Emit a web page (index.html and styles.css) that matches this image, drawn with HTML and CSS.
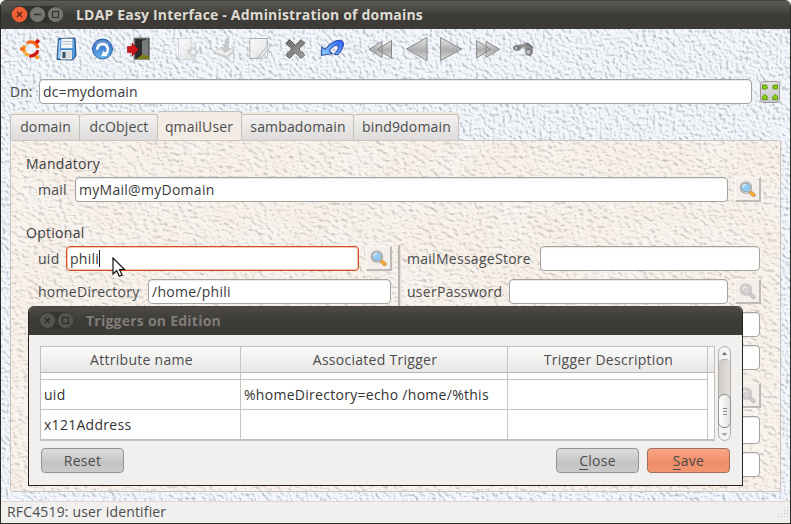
FILE: index.html
```html
<!DOCTYPE html>
<html lang="en">
<head>
<meta charset="utf-8">
<title>LDAP Easy Interface - Administration of domains</title>
<link rel="stylesheet" href="styles.css">
</head>
<body>
<svg class="defs" width="0" height="0" aria-hidden="true">
  <defs>
    <filter id="blueStone" x="0" y="0" width="100%" height="100%" color-interpolation-filters="sRGB">
      <feTurbulence type="fractalNoise" baseFrequency="0.3" numOctaves="2" seed="4"/>
      <feDiffuseLighting surfaceScale="2.2" diffuseConstant="1.27" lighting-color="#fff"><feDistantLight azimuth="315" elevation="52"/></feDiffuseLighting>
      <feColorMatrix values=".34 0 0 0 .612  0 .33 0 0 .64  0 0 .3 0 .687  0 0 0 0 1"/>
    </filter>
    <filter id="pinkStone" x="0" y="0" width="100%" height="100%" color-interpolation-filters="sRGB">
      <feTurbulence type="fractalNoise" baseFrequency="0.025" numOctaves="1" seed="3"/>
      <feColorMatrix result="tint" values="0 0 0 0 .975  .03 0 0 0 .935  .05 0 0 0 .9  0 0 0 0 1"/>
      <feTurbulence type="fractalNoise" baseFrequency="0.2 0.3" numOctaves="3" seed="9"/>
      <feDiffuseLighting surfaceScale="2" diffuseConstant="1.25" lighting-color="#fff"><feDistantLight azimuth="310" elevation="55"/></feDiffuseLighting>
      <feColorMatrix result="relief" values=".3 0 0 0 .7  0 .3 0 0 .7  0 0 .3 0 .7  0 0 0 0 1"/>
      <feBlend in="tint" in2="relief" mode="multiply"/>
    </filter>
    <linearGradient id="silver" x1="0" y1="0" x2="0" y2="1"><stop offset="0" stop-color="#e8e8e8"/><stop offset=".55" stop-color="#adadad"/><stop offset="1" stop-color="#dedede"/></linearGradient>
    <linearGradient id="steel" x1="0" y1="0" x2="1" y2="1"><stop offset="0" stop-color="#6b6b6b"/><stop offset="1" stop-color="#a2a2a2"/></linearGradient>
    <linearGradient id="blue" x1="0" y1="0" x2="0" y2="1"><stop offset="0" stop-color="#2a62b8"/><stop offset="1" stop-color="#69b4f0"/></linearGradient>
    <linearGradient id="undo" x1="1" y1="0" x2="0" y2="1"><stop offset="0" stop-color="#2458ff"/><stop offset="1" stop-color="#8fe0ff"/></linearGradient>
    <linearGradient id="paper" x1="0" y1="0" x2="1" y2="1"><stop offset="0" stop-color="#fff"/><stop offset="1" stop-color="#dcdcdc"/></linearGradient>
    <symbol id="lens" viewBox="0 0 16 16">
      <path d="M9.5 9.5l4.3 3.7" stroke="#b98a45" stroke-width="3.6" stroke-linecap="round"/>
      <path d="M10.8 10.6l3 2.6" stroke="#ffae32" stroke-width="2.4" stroke-linecap="round"/>
      <circle cx="6.5" cy="6.2" r="4.7" fill="#8fcdf5" stroke="#8f9496" stroke-width="2.1"/>
      <circle cx="6.5" cy="6.2" r="4.7" fill="none" stroke="#dcdfdf" stroke-width=".8"/>
      <path d="M3.6 6a3 3 0 0 1 3-2.7" fill="none" stroke="#d8f0ff" stroke-width="1.2"/>
    </symbol>
  </defs>
</svg>

<div class="window">
  <header class="titlebar">
    <span class="winbtns">
      <svg width="52" height="18" viewBox="0 0 52 18">
        <rect x="0" y="0" width="52" height="17" rx="8.5" fill="#33322e"/>
        <circle cx="8.5" cy="8.5" r="7.8" fill="#ec6034"/><path d="M6 6l5 5M11 6l-5 5" stroke="#5d2413" stroke-width="1.4"/>
        <circle cx="26.5" cy="8.5" r="7.6" fill="#777570"/><path d="M23 8.5h7" stroke="#33322e" stroke-width="1.4"/>
        <circle cx="44.5" cy="8.5" r="7.6" fill="#777570"/><rect x="41.5" y="5.5" width="6" height="6" fill="none" stroke="#33322e" stroke-width="1.2"/>
      </svg>
    </span>
    <span class="title main-title">LDAP Easy Interface - Administration of domains</span>
  </header>

  <main class="client">
    <svg class="texture" width="100%" height="100%"><rect width="100%" height="100%" filter="url(#blueStone)"/></svg>

    <nav class="toolbar">
      <i class="grip"></i>
      <svg class="tool" viewBox="0 0 24 24"><g fill="none" stroke-width="3.4"><path d="M5.800 15.500A7 7 0 0 1 5.800 8.500" stroke="#f7941d"/><path d="M7.800 6.200a7 7 0 0 1 11 5" stroke="#f4661b"/><path d="M18.800 13.200a7 7 0 0 1-8.500 5.500" stroke="#d4140c"/><path d="M9.500 18.500a7 7 0 0 1-3-2.700" stroke="#f7a31d"/></g><circle cx="3" cy="12" r="2.100" fill="#f4661b"/><circle cx="18.500" cy="4.300" r="2.100" fill="#d4140c"/><circle cx="18" cy="20.300" r="2.100" fill="#f79a1d"/></svg>
      <svg class="tool" viewBox="0 0 24 24"><path d="M3.500 1.500L20 1l1 18-3.500 4-15.500-.5z" fill="#3f86cf" stroke="#2d4f76"/><path d="M4 3h1.500l-.7 18H3z" fill="#9fd0ff"/><path d="M6.500 1.700h11v9.500H6z" fill="#f4f7fa"/><path d="M7.500 4.500h9M7.500 7h9" stroke="#b6c0c8"/><path d="M6 13.500h10.500v8.500H5.500z" fill="#d9dcda" stroke="#fff" stroke-width=".7"/><path d="M7.500 15h3v6h-3z" fill="#34536f"/><path d="M18.500 3v17" stroke="#64a8ea" stroke-width="1.200"/></svg>
      <svg class="tool" viewBox="0 0 24 24"><circle cx="11.500" cy="12" r="10" fill="url(#blue)" stroke="#2860aa"/><path d="M3.500 7.500a9.500 9.500 0 0 1 16 0Q11.500 11 3.500 7.500z" fill="#fff" opacity=".25"/><path d="M6.300 12.600a5.300 5.300 0 1 1 7.900 4.300" fill="none" stroke="#fff" stroke-width="2.700"/><path d="M16.500 19l-6.500.300 2.500-5.500z" fill="#fff"/></svg>
      <svg class="tool" viewBox="0 0 24 24"><path d="M7 1h15.500v21.500H7z" fill="#3a3b3b" stroke="#8c8c88"/><path d="M15 4l6.500-2.500v18H15z" fill="#777b7b"/><path d="M8 22l7-5 7 2.500v2.500z" fill="#7d7a19"/><path d="M15 2.500v15.300L9 22V2z" fill="#292a2a"/><path d="M.5 9.500H5V6l6.500 6.500L5 19v-3.400H.5z" fill="#cf151a" stroke="#900" stroke-width=".6"/></svg>
      <i class="grip second"></i>
      <svg class="tool faded" viewBox="0 0 24 24"><path d="M1.500 1.500H14l4.500 4.500v16.500h-17z" fill="url(#paper)" stroke="#d0d0d0"/><path d="M14 1.500V6h4.500" fill="#fff" stroke="#ccc"/><circle cx="16" cy="15" r="4" fill="none" stroke="#c4c4c4" stroke-width="2.500" stroke-dasharray="2 1.200"/><circle cx="16" cy="15" r="3" fill="#f1f1f1" stroke="#c4c4c4"/></svg>
      <svg class="tool faded" viewBox="0 0 24 24"><path d="M.5 15l8-4.500 13 2-8 7z" fill="#ededed" stroke="#c4c4c4"/><path d="M21.500 13v2l-8 6.500-13-5v-1.500l13 4.500z" fill="#c0c0c0"/><path d="M13 1.500L16 1l-1 10 2.500 1-5.500 3.500-4-5 3 .3z" fill="#c1c1c1" stroke="#aaa" stroke-width=".6"/></svg>
      <svg class="tool faded" viewBox="0 0 24 24"><path d="M.8 1.500h17.500v11l-8.500 9H.8z" fill="url(#paper)" stroke="#999"/><path d="M8.500 21l3-4L19.500 8l1.700 1.800L13 20z" fill="#e5e5e5" stroke="#aaa"/><path d="M9 21.800l9.500-.8v-7" fill="none" stroke="#bbb"/></svg>
      <svg class="tool" viewBox="0 0 24 24"><path d="M4.500 2.500l5.800 5.800 5.800-5.800 3.700 3.700-5.800 5.800 5.800 5.800-3.700 3.700-5.800-5.800-5.800 5.800-3.700-3.700 5.800-5.800-5.800-5.800z" fill="url(#steel)" stroke="#484848" stroke-dasharray="1.500 .5"/></svg>
      <svg class="tool" viewBox="0 0 24 24"><path d="M.7 10l3.500 2.500C9 6 14 3 19.500 3.200c4.500 1.300 4 7.300-2.500 14.300l-3.700-.2c4.500-4.500 5-8.300 2.700-9-2.500-.500-5.500 2-7.700 5.700l3 2.500-10.600 1.800z" fill="url(#undo)" stroke="#3451a8" stroke-width="1.100"/></svg>
      <i class="grip third"></i>
      <svg class="tool" viewBox="0 0 24 24"><path d="M14 4.500v16L1 12.300zM23.500 3.500v17.500L9.500 12.300z" fill="url(#silver)" stroke="#878787"/></svg>
      <svg class="tool" viewBox="0 0 24 24"><path d="M23 .6v23L2.500 12z" fill="url(#silver)" stroke="#878787"/></svg>
      <svg class="tool" viewBox="0 0 24 24"><path d="M.6.600v23L21.500 12z" fill="url(#silver)" stroke="#878787"/></svg>
      <svg class="tool" viewBox="0 0 24 24"><path d="M.6 3.500v17.500L14.500 12.300zM10 4.500v16L23.500 12.300z" fill="url(#silver)" stroke="#878787"/></svg>
      <svg class="tool" viewBox="0 0 24 24"><path d="M4 8.500l6-1.500 2 2-5 5z" fill="#8b8b8b"/><ellipse cx="4.500" cy="11" rx="3.500" ry="2.800" fill="#777"/><path d="M9 7.500l7-1.500 5.500 4.500-2 6.500-5-2-2-4z" fill="#959595"/><path d="M12 6l4-.5 5.500 4.500-3 1z" fill="#777"/><circle cx="17" cy="15" r="3.700" fill="#777"/><circle cx="16.500" cy="15" r="2.200" fill="#bdbdbd"/><circle cx="4" cy="11" r="1.600" fill="#b7b7b7"/></svg>
    </nav>

    <div class="row dn-row">
      <span class="label w-dn">Dn:</span>
      <div class="field">dc=mydomain</div>
      <div class="expand"><svg width="18" height="20" viewBox="0 0 18 20"><g fill="#84cf08" stroke="#55850f" stroke-width=".8"><path d="M1.500 3h4l1 3-1 1h-4zM12.500 3h4v4h-4l-1-1zM1.500 14.500l2.200-2 2.500 2v3H1.500zM11.800 14.500l2.500-2 2.200 2v3h-4.700z"/></g></svg></div>
    </div>

    <div class="tabs">
      <span class="tab t1">domain</span><span class="tab t2">dcObject</span><span class="tab t3 active">qmailUser</span><span class="tab t4">sambadomain</span><span class="tab t5">bind9domain</span>
    </div>

    <section class="pane">
      <svg class="texture" width="100%" height="100%"><rect width="100%" height="100%" filter="url(#pinkStone)"/></svg>
      <div class="group">Mandatory</div>
      <div class="row indent">
        <span class="label w-mail">mail</span><div class="field">myMail@myDomain</div>
        <span class="search"><svg width="20" height="20"><use href="#lens"/></svg></span>
      </div>
      <div class="group second-group">Optional</div>
      <div class="columns">
        <div class="col left">
          <div class="row"><span class="label w-uid">uid</span><div class="field focus">phili<i class="caret"></i></div><span class="search"><svg width="20" height="20"><use href="#lens"/></svg></span></div>
          <div class="row"><span class="label w-home">homeDirectory</span><div class="field">/home/phili</div></div>
        </div>
        <i class="splitter"></i>
        <div class="col right">
          <div class="row"><span class="label w-store">mailMessageStore</span><div class="field"></div></div>
          <div class="row"><span class="label w-pass">userPassword</span><div class="field"></div><span class="search off"><svg width="20" height="20"><use href="#lens"/></svg></span></div>
          <div class="row"><div class="field"></div></div>
          <div class="row"><div class="field"></div></div>
          <div class="row low"><div class="field"></div><span class="search off"><svg width="20" height="20"><use href="#lens"/></svg></span></div>
          <div class="row tall"><div class="field"></div></div>
          <div class="row"><div class="field"></div></div>
        </div>
      </div>
    </section>
  </main>

  <footer class="status"><span class="status-text">RFC4519: user identifier</span>
    <svg width="12" height="12" viewBox="0 0 12 12"><path d="M10.500 1v10M7.500 4v7M4.500 7v4M1.500 10v1" stroke="#c4c2c0" stroke-dasharray="1 2"/></svg>
  </footer>
</div>

<svg class="pointer" width="14" height="21" viewBox="0 0 14 21"><path d="M1 1v16l3.700-3.500 2.600 5.800 2.800-1.200-2.600-5.600h5z" fill="#fff" stroke="#111" stroke-width="1.200"/></svg>

<div class="dialog">
  <header class="titlebar">
    <span class="winbtns">
      <svg width="34" height="18" viewBox="0 0 34 18"><rect width="34" height="17" rx="8.500" fill="#363531"/><circle cx="8.500" cy="8.500" r="7.600" fill="#55544f"/><path d="M6 6l5 5M11 6l-5 5" stroke="#2d2c29" stroke-width="1.400"/><circle cx="26.500" cy="8.500" r="7.600" fill="#55544f"/><rect x="23.500" y="5.500" width="6" height="6" fill="none" stroke="#2d2c29" stroke-width="1.200"/></svg>
    </span>
    <span class="title sub-title">Triggers on Edition</span>
  </header>
  <div class="dialog-body">
    <div class="table-wrap">
      <div class="table">
        <div class="tr head"><span>Attribute name</span><span>Associated Trigger</span><span>Trigger Description</span><span></span></div>
        <div class="tr sliver"><span></span><span></span><span></span></div>
        <div class="tr"><span>uid</span><span>%homeDirectory=echo /home/%this</span><span></span></div>
        <div class="tr"><span>x121Address</span><span></span><span></span></div>
      </div>
      <div class="scroll">
        <svg class="arrow" width="11" height="12" viewBox="0 0 11 12"><path d="M3 8h5L5.500 5z" fill="#6b6966"/></svg>
        <div class="track"><div class="thumb"><i></i><i></i><i></i></div></div>
        <svg class="arrow" width="11" height="12" viewBox="0 0 11 12"><path d="M2.500 5h6L5.500 8z" fill="#a3a09d"/></svg>
      </div>
    </div>
    <div class="buttons">
      <span class="btn">Reset</span>
      <span class="btn"><u>C</u>lose</span>
      <span class="btn primary"><u>S</u>ave</span>
    </div>
  </div>
</div>
</body>
</html>
```
FILE: styles.css
```css
* { box-sizing: border-box; }
body {
  margin: 0;
  width: 791px;
  height: 524px;
  overflow: hidden;
  position: relative;
  font: 14px/20px "Open Sans", "Noto Sans", sans-serif;
  letter-spacing: .28px;
  color: #4c4c4c;
  background: #fff;
}
.defs { position: absolute; }
.window {
  height: 524px;
  display: flex;
  flex-direction: column;
  border: 1px solid #2b2a27;
  border-width: 0 1px;
  border-radius: 6px 6px 0 0;
  overflow: hidden;
}
.titlebar {
  height: 29px;
  flex: none;
  display: flex;
  align-items: center;
  padding-left: 10px;
  border-top: 1px solid #45443f;
  background: linear-gradient(#5b5953, #45443f 40%, #3c3b37 50%, #3c3b37);
}
.winbtns { display: flex; width: 65px; }
.title { font-weight: 700; color: #dfdbd2; white-space: nowrap; letter-spacing: .18px; }
.client {
  position: relative;
  flex: 1;
  overflow: hidden;
  isolation: isolate;
  background: #edf2f8;
}
.texture { position: absolute; inset: 0; z-index: -1; }
.toolbar { height: 50px; display: flex; align-items: center; padding: 0 0 10px 3px; }
.tool { width: 24px; height: 24px; flex: none; margin-right: 12px; }
.grip { width: 5px; height: 9px; flex: none; margin-right: 10px; background: repeating-linear-gradient(#ded6d2 0 1px, transparent 1px 4px); }
.second { margin: 0 10px 0 -1px; }
.third { margin: 0 8px 0 -2px; }
.faded { opacity: .8; }
.row { display: flex; align-items: center; height: 25px; }
.dn-row { padding: 0 10px 0 9px; }
.label { flex: none; white-space: nowrap; }
.w-dn { width: 29px; letter-spacing: 0; }
.w-mail { width: 37px; }
.w-uid { width: 28px; }
.w-home { width: 110px; }
.w-store { width: 133px; }
.w-pass { width: 102px; }
.field {
  flex: 1;
  height: 25px;
  padding: 1px 3px;
  background: #fff;
  border: 1px solid #a6a29e;
  border-radius: 4px;
  color: #3a3a3a;
  line-height: 22px;
  white-space: nowrap;
  box-shadow: inset 0 1px 1px #e7e7e7;
}
.dn-row .field { letter-spacing: .15px; }
.focus { border-color: #d2501f; box-shadow: inset 0 0 0 1px #f7c3ae; display: flex; }
.caret { width: 1px; height: 17px; margin-top: 2px; background: #222; }
.expand {
  width: 20px;
  height: 22px;
  margin-left: 8px;
  border: 1px solid #9c9995;
  border-radius: 4px;
  background: linear-gradient(#e1e1e1, #c6c6c6);
  display: flex;
}
.tabs { display: flex; align-items: flex-end; height: 36px; padding-left: 9px; letter-spacing: .15px; }
.tab {
  height: 26px;
  border: 1px solid #c5bfba;
  border-left: 0;
  border-bottom: 0;
  border-radius: 3px 3px 0 0;
  background: linear-gradient(#f3f2f1, #dedcda);
  text-align: center;
  line-height: 24px;
  padding-left: 1px;
  box-shadow: 0 -2px #f1e8e2;
  white-space: nowrap;
}
.t1 { width: 70px; border-left: 1px solid #c5bfba; }
.t2 { width: 78px; }
.t3 { width: 84px; }
.t4 { width: 112px; }
.t5 { width: 105px; }
.active { height: 29px; padding: 3px 1px 0 0; background: #f3ece6; box-shadow: none; }
.pane {
  position: relative;
  isolation: isolate;
  overflow: hidden;
  height: 352px;
  margin: 0 9px;
  padding: 13px 19px 0 15px;
  border: 1px solid #cbc4bf;
  border-radius: 0 3px 3px 3px;
}
.group { height: 23px; color: #3d3d3d; }
.second-group { margin-top: 21px; }
.indent { padding-left: 12px; }
.search {
  width: 26px;
  height: 25px;
  margin-left: 7px;
  flex: none;
  display: flex;
  align-items: center;
  justify-content: center;
  background: #f3edeb;
  border: 1px solid #fbf8f6;
  border-right: 2px solid #bdbab8;
  border-bottom: 2px solid #bdbab8;
}
.search svg { width: 17px; height: 17px; }
.off svg { filter: grayscale(1); opacity: .6; }
.columns { display: flex; }
.col { display: flex; flex-direction: column; gap: 8px; }
.left { width: 366px; padding-left: 12px; }
.left .row:last-child { padding-right: 1px; }
.splitter { width: 3px; height: 240px; margin: -1px 6px 0 6px; background: #bab6b3; border-right: 1px solid #e4dfdb; }
.right { flex: 1; padding-right: 1px; }
.right .search { margin-right: -1px; }
.low { margin-top: 5px; }
.tall { height: 28px; }
.tall .field { height: 28px; }
.status {
  height: 23px;
  flex: none;
  display: flex;
  align-items: center;
  justify-content: space-between;
  padding: 0 1px 1px 6px;
  border-top: 1px solid #dad7d4;
  border-bottom: 1px solid #2b2a27;
  background: #f1f0ef;
  letter-spacing: .16px;
}
.pointer { position: absolute; left: 112px; top: 257px; }
.dialog {
  position: absolute;
  left: 28px;
  top: 306px;
  width: 715px;
  height: 180px;
  border: 1px solid #24231f;
  border-top: 0;
  border-radius: 6px 6px 0 0;
  overflow: hidden;
  background: #f1f0ef;
}
.dialog .titlebar { background: linear-gradient(#4c4b46, #3c3b37 50%); }
.dialog .winbtns { width: 47px; }
.dialog .title { color: #807d77; letter-spacing: .24px; }
.dialog-body { padding: 11px 11px 0 11px; }
.table-wrap { display: flex; gap: 3px; height: 95px; }
.table { width: 675px; border: 1px solid #c3bfbc; border-bottom-width: 2px; background: #fff; overflow: hidden; }
.tr { display: grid; grid-template-columns: 200px 267px 200px 1fr; height: 30px; line-height: 29px; }
.tr span { border-right: 1px solid #c4c4c4; border-bottom: 1px solid #c4c4c4; padding-left: 3px; white-space: nowrap; color: #333; }
.tr span:last-child:nth-child(4) { border-right: 0; }
.tr.head { height: 25px; line-height: 25px; background: linear-gradient(#fbfbfa, #e7e6e5); }
.tr.head span { text-align: center; color: #4c4c4c; padding: 0 0 0 2px; border-bottom-color: #b9b6b3; }
.tr.sliver { height: 8px; }
.scroll {
  width: 13px;
  height: 95px;
  border: 1px solid #b3afac;
  border-radius: 7px;
  background: #f4f3f2;
  display: flex;
  flex-direction: column;
}
.arrow { flex: none; }
.track { flex: 1; background: linear-gradient(90deg, #cfcac7, #e2dfdd); border-top: 1px solid #b3afac; border-radius: 5px 5px 6px 6px; display: flex; align-items: flex-end; }
.thumb {
  flex: 1;
  height: 34px;
  margin: 0 -1px;
  border: 1px solid #93908d;
  border-radius: 6px;
  background: linear-gradient(90deg, #fff, #e4e2e1);
  display: flex;
  flex-direction: column;
  align-items: center;
  justify-content: center;
  gap: 2px;
}
.thumb i { width: 4px; height: 1px; background: #8f8c89; }
.buttons { display: flex; gap: 8px; margin-top: 7px; padding: 0 1px; }
.btn {
  width: 83px;
  height: 25px;
  border: 1px solid #979391;
  border-radius: 4px;
  background: linear-gradient(#dedddd, #c5c4c4 60%, #cbcaca);
  text-align: center;
  line-height: 23px;
}
.btn:first-child { margin-right: auto; }
.btn u { text-decoration-thickness: 1px; text-underline-offset: 3px; }
.primary { border-color: #a0705e; background: linear-gradient(#f9a685, #ef8d68 60%, #f19672); }
```
